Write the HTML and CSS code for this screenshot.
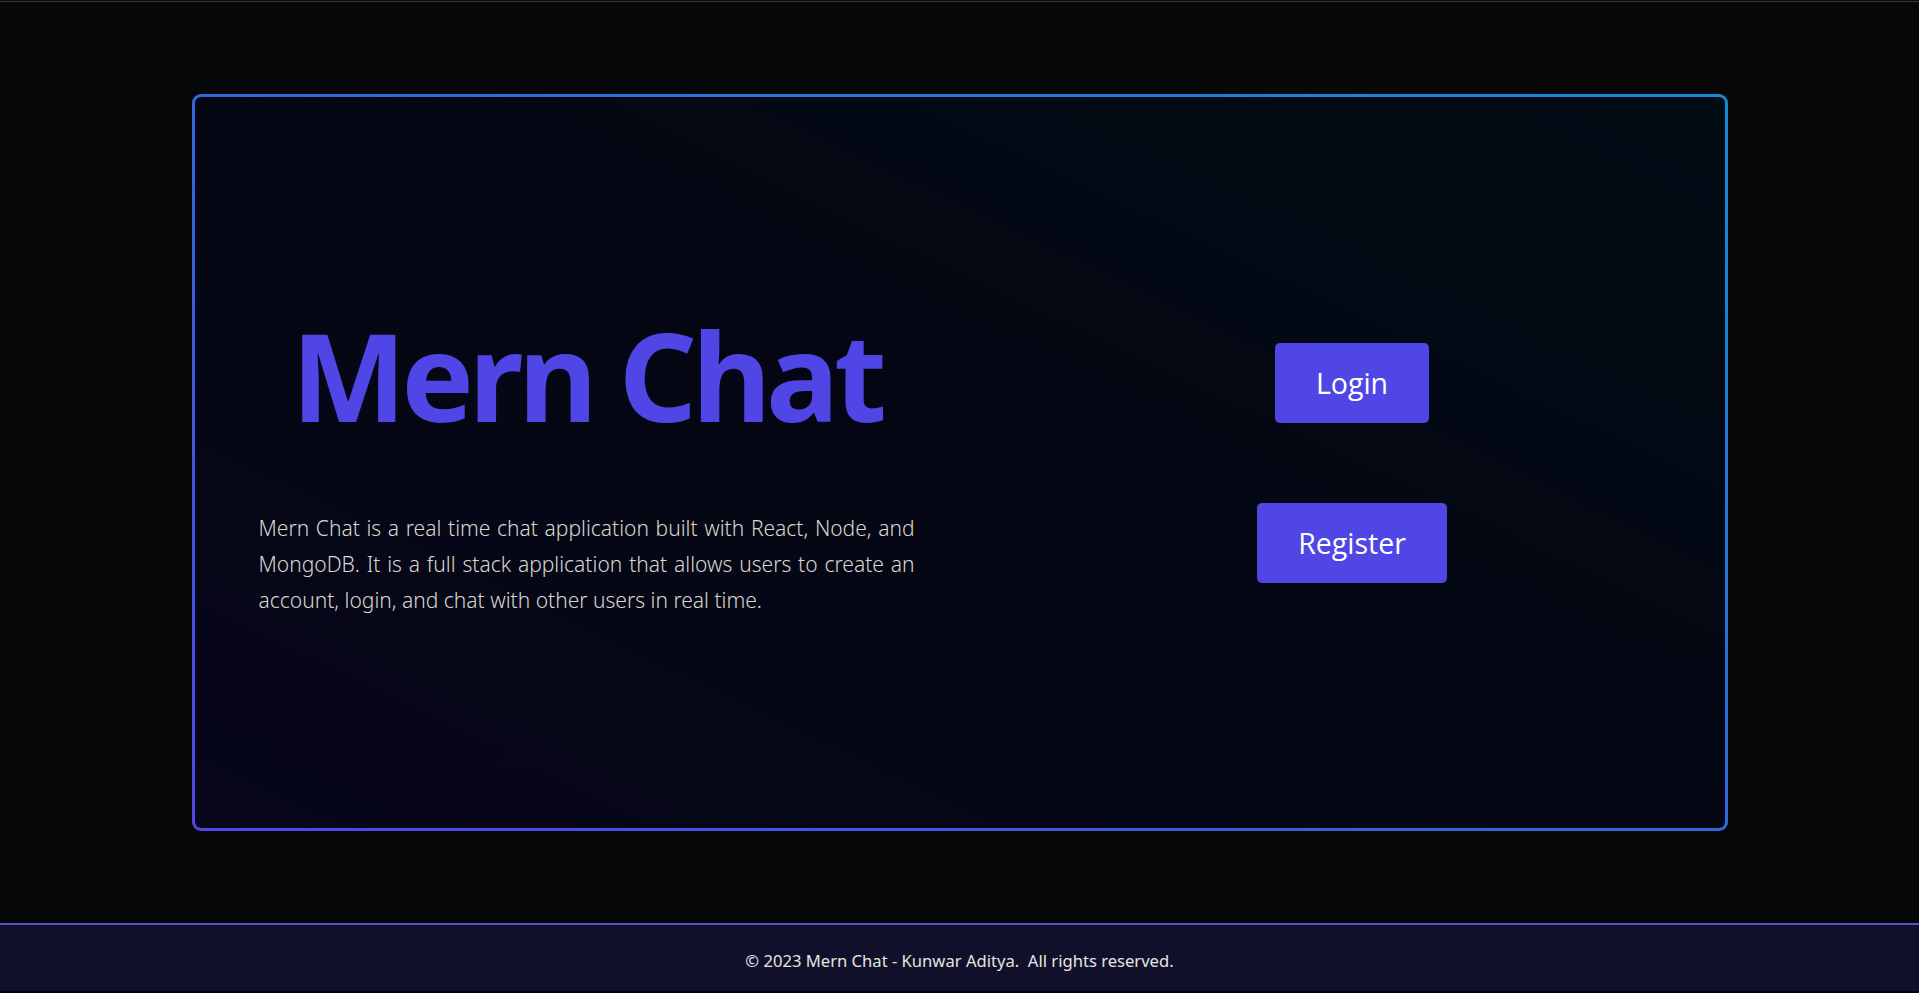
FILE: index.html
```html
<!DOCTYPE html>
<html lang="en">
<head>
<meta charset="utf-8">
<title>Mern Chat</title>
<link rel="stylesheet" href="styles.css">
</head>
<body>
<div class="topline"></div>
<main class="stage">
  <section class="card">
    <div class="intro">
      <h1 class="brand">Mern Chat</h1>
      <p class="about">Mern Chat is a real time chat application built with React, Node, and MongoDB. It is a full stack application that allows users to create an account, login, and chat with other users in real time.</p>
    </div>
    <div class="actions">
      <a class="btn" href="#">Login</a>
      <a class="btn" href="#">Register</a>
    </div>
  </section>
</main>
<footer class="footer">
  <p class="copy">© 2023 Mern Chat - Kunwar Aditya.&nbsp; All rights reserved.</p>
</footer>
</body>
</html>
```
FILE: styles.css
```css
html, body {
  height: 100%;
}
body {
  margin: 0;
  background: #060709;
  display: flex;
  flex-direction: column;
  min-height: 100vh;
}
.topline {
  flex: none;
  height: 1px;
  margin-top: 1px;
  background: #3a3a3c;
}
.stage {
  flex: 1;
  display: flex;
  align-items: center;
  justify-content: center;
}
.card {
  box-sizing: border-box;
  width: 1536px;
  height: 737px;
  border: 3px solid transparent;
  border-radius: 9px;
  background:
    linear-gradient(to top right, #07061a, #040713 50%, #020c15) padding-box,
    linear-gradient(to top right, #4f46e5, #1688d0) border-box;
  display: flex;
  align-items: center;
}
.intro {
  box-sizing: border-box;
  width: 785px;
  padding: 5px 65px 0 64px;
  display: flex;
  flex-direction: column;
  align-items: center;
}
.brand {
  margin: 0 0 73px;
  font-family: "Noto Sans", sans-serif;
  font-weight: 700;
  font-size: 122px;
  letter-spacing: -5.2px;
  line-height: 124px;
  color: #4f46e5;
  white-space: nowrap;
}
.about {
  margin: 0;
  font-family: "Noto Sans", sans-serif;
  font-weight: 300;
  font-stretch: 87.5%;
  font-size: 21px;
  line-height: 36px;
  text-align: justify;
  color: #d9d6cf;
}
.actions {
  flex: 1;
  display: flex;
  flex-direction: column;
  align-items: center;
  gap: 80px;
}
.btn {
  display: block;
  box-sizing: border-box;
  height: 80px;
  padding: 0 41px;
  line-height: 80px;
  background: #4f46e5;
  color: #fff;
  border-radius: 5px;
  font-family: "Open Sans", sans-serif;
  font-size: 28.5px;
  text-decoration: none;
}
.footer {
  flex: none;
  box-sizing: border-box;
  height: 70px;
  padding-top: 4px;
  border-top: 2px solid #5b50c9;
  border-bottom: 2px solid #020203;
  background: #11102a;
  display: flex;
  align-items: center;
  justify-content: center;
}
.copy {
  margin: 0;
  font-family: "Noto Sans", sans-serif;
  font-size: 16.6px;
  font-stretch: 87.5%;
  color: #e6e4e0;
}
```
